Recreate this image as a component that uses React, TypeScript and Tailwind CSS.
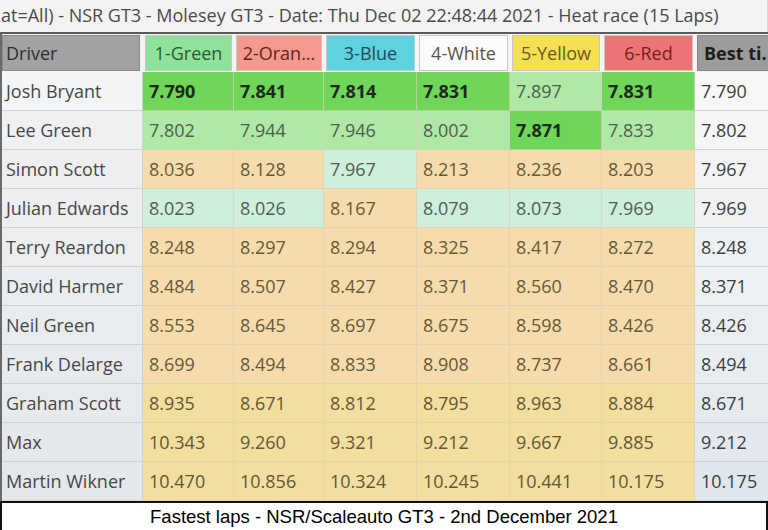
import React from "react";

type Kind = "G" | "L" | "M" | "T" | "Y";
type Cell = [string, Kind];

const rows: { name: string; cells: Cell[]; best: string; bestBg: string; nameBg: string }[] = [
  { name: "Josh Bryant", cells: [["7.790", "G"], ["7.841", "G"], ["7.814", "G"], ["7.831", "G"], ["7.897", "L"], ["7.831", "G"]], best: "7.790", bestBg: "bg-[#f7f7f7]", nameBg: "bg-[#f3f4f5]" },
  { name: "Lee Green", cells: [["7.802", "L"], ["7.944", "L"], ["7.946", "L"], ["8.002", "L"], ["7.871", "G"], ["7.833", "L"]], best: "7.802", bestBg: "bg-[#f6f6f7]", nameBg: "bg-[#eef0f2]" },
  { name: "Simon Scott", cells: [["8.036", "T"], ["8.128", "T"], ["7.967", "M"], ["8.213", "T"], ["8.236", "T"], ["8.203", "T"]], best: "7.967", bestBg: "bg-[#f2f3f5]", nameBg: "bg-[#eceef0]" },
  { name: "Julian Edwards", cells: [["8.023", "M"], ["8.026", "M"], ["8.167", "T"], ["8.079", "M"], ["8.073", "M"], ["7.969", "M"]], best: "7.969", bestBg: "bg-[#f0f2f4]", nameBg: "bg-[#eceef0]" },
  { name: "Terry Reardon", cells: [["8.248", "T"], ["8.297", "T"], ["8.294", "T"], ["8.325", "T"], ["8.417", "T"], ["8.272", "T"]], best: "8.248", bestBg: "bg-[#eef1f3]", nameBg: "bg-[#ebedef]" },
  { name: "David Harmer", cells: [["8.484", "T"], ["8.507", "T"], ["8.427", "T"], ["8.371", "T"], ["8.560", "T"], ["8.470", "T"]], best: "8.371", bestBg: "bg-[#ecf0f2]", nameBg: "bg-[#eaedef]" },
  { name: "Neil Green", cells: [["8.553", "T"], ["8.645", "T"], ["8.697", "T"], ["8.675", "T"], ["8.598", "T"], ["8.426", "T"]], best: "8.426", bestBg: "bg-[#eaeef1]", nameBg: "bg-[#e9ecee]" },
  { name: "Frank Delarge", cells: [["8.699", "T"], ["8.494", "T"], ["8.833", "T"], ["8.908", "T"], ["8.737", "T"], ["8.661", "T"]], best: "8.494", bestBg: "bg-[#e8edf0]", nameBg: "bg-[#e8ebee]" },
  { name: "Graham Scott", cells: [["8.935", "Y"], ["8.671", "Y"], ["8.812", "Y"], ["8.795", "Y"], ["8.963", "Y"], ["8.884", "Y"]], best: "8.671", bestBg: "bg-[#e5ebef]", nameBg: "bg-[#e7eaed]" },
  { name: "Max", cells: [["10.343", "Y"], ["9.260", "Y"], ["9.321", "Y"], ["9.212", "Y"], ["9.667", "Y"], ["9.885", "Y"]], best: "9.212", bestBg: "bg-[#e3e9ee]", nameBg: "bg-[#e6e9ec]" },
  { name: "Martin Wikner", cells: [["10.470", "Y"], ["10.856", "Y"], ["10.324", "Y"], ["10.245", "Y"], ["10.441", "Y"], ["10.175", "Y"]], best: "10.175", bestBg: "bg-[#e1e8ed]", nameBg: "bg-[#e5e8eb]" },
];

const kindCls: Record<Kind, string> = {
  G: "bg-[#6fd65a] text-[#1c2a1c] font-bold",
  L: "bg-[#b0e8a6] text-[#4d5f4d]",
  M: "bg-[#cfeedb] text-[#4f5d55]",
  T: "bg-[#f6dcac] text-[#675838]",
  Y: "bg-[#f2dfa0] text-[#645634]",
};

const headers = [
  { t: "1-Green", c: "bg-[#8fe29a] text-[#2b5a34]" },
  { t: "2-Oran...", c: "bg-[#f49a8c] text-[#6a2020]" },
  { t: "3-Blue", c: "bg-[#5fd2e0] text-[#1f4a55]" },
  { t: "4-White", c: "bg-[#fbfbfb] text-[#555555]" },
  { t: "5-Yellow", c: "bg-[#f4df55] text-[#6a5a1a]" },
  { t: "6-Red", c: "bg-[#eb7474] text-[#7a1c1c]" },
];

const cols = "grid grid-cols-[141px_91px_90px_93px_93px_92px_93px_75px]";

export default function App() {
  return (
    <div
      className="w-[768px] h-[530px] overflow-hidden bg-[#f1f2f3] flex flex-col"
      style={{ fontFamily: '"Open Sans", "Noto Sans", sans-serif' }}
    >
      <div className="h-[32px] shrink-0 bg-[#f3f3f3] text-[#4a4a4a] text-[18px] leading-[30px] whitespace-nowrap overflow-hidden pl-[1px] border-r border-[#d8d8d8]">
        at=All) - NSR GT3 - Molesey GT3 - Date: Thu Dec 02 22:48:44 2021 - Heat race (15 Laps)
      </div>
      <div className="h-[2px] shrink-0 bg-[#5a5a5a]" />
      <div className={`${cols} h-[38px] shrink-0 bg-[#f4f4f4] border-l-2 border-[#6a6a6a]`}>
        <div className="pr-[3px] py-[1px]">
          <div className="h-full bg-[#a2a2a2] text-[#2e2e2e] text-[18px] flex items-center pl-[3px] border border-[#8a8a8a]">Driver</div>
        </div>
        {headers.map((h, i) => (
          <div key={i} className="px-[2px] py-[1px]">
            <div className={`h-full ${h.c} text-[18px] flex items-center justify-center border border-[#c8c8c8] whitespace-nowrap overflow-hidden`}>{h.t}</div>
          </div>
        ))}
        <div className="pl-[2px] py-[1px]">
          <div className="h-full bg-[#9c9c9c] text-[#1e1e1e] text-[18px] font-bold flex items-center pl-[6px] border border-[#858585] whitespace-nowrap overflow-hidden">Best ti.</div>
        </div>
      </div>
      <div className="flex flex-col border-l-2 border-[#6a6a6a]">
        {rows.map((r) => (
          <div key={r.name} className={`${cols} h-[39px]`}>
            <div className={`${r.nameBg} text-[#474747] text-[18px] flex items-center pl-[4px] border-b border-r border-[#cfd2d5] whitespace-nowrap`}>{r.name}</div>
            {r.cells.map(([v, k], i) => (
              <div key={i} className={`${kindCls[k]} text-[18px] flex items-center pl-[6px] border-b border-r border-[#d9cfb8]/70`}>{v}</div>
            ))}
            <div className={`${r.bestBg} text-[#3e3e3e] text-[18px] flex items-center pl-[6px] border-b border-[#cfd2d5]`}>{r.best}</div>
          </div>
        ))}
      </div>
      <div
        className="flex-1 bg-white border-2 border-[#111111] flex items-center justify-center text-[18.5px] text-black"
        style={{ fontFamily: '"Liberation Sans", Arial, sans-serif' }}
      >
        Fastest laps - NSR/Scaleauto GT3 - 2nd December 2021
      </div>
    </div>
  );
}
